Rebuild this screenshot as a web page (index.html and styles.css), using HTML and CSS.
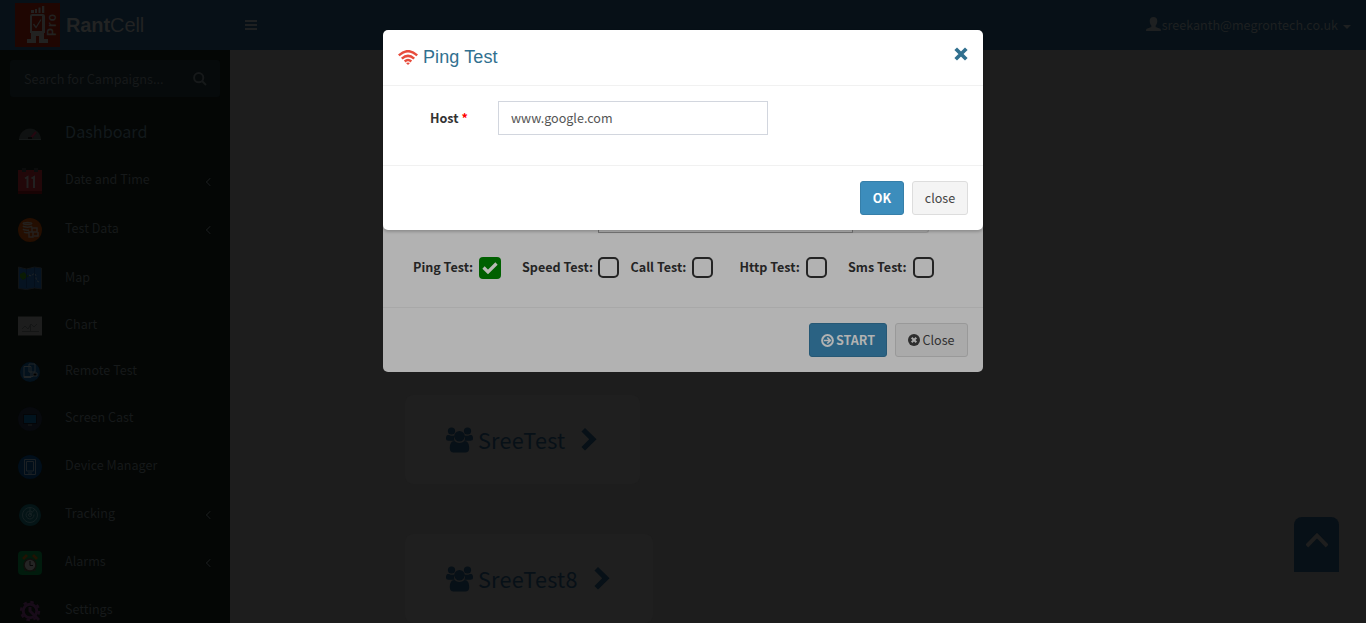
FILE: index.html
```html
<!DOCTYPE html>
<html lang="en">
<head>
<meta charset="utf-8">
<title>RantCell</title>
<link rel="stylesheet" href="styles.css">
</head>
<body>
<svg class="defs" width="0" height="0">
  <symbol id="users" viewBox="0 0 27 26">
    <circle cx="5.5" cy="4" r="3.6"/><circle cx="21.5" cy="4" r="3.6"/>
    <path d="M2 8h1c2 1 4 1 5.500 .6C7.500 11 8 12.500 8.800 13.700H2.600C1 13.700 0 13 0 11.500 0 10 .4 8 2 8zM25 8h-1c-2 1-4 1-5.500.6 1 2.400.5 3.900-.3 5.100h6.200c1.600 0 2.600-.7 2.600-2.200 0-1.500-.4-3.500-2-3.500z"/>
    <circle cx="13.500" cy="9.300" r="5.300"/>
    <path d="M8.500 14c3 2.600 7 2.600 10 0 3.500 0 4.700 3.500 4.700 7.500 0 2.800-1.600 4-3.700 4h-12c-2.100 0-3.700-1.200-3.700-4 0-4 1.200-7.500 4.700-7.500z"/>
  </symbol>
  <symbol id="go" viewBox="0 0 16 23"><path d="M4 0l11.500 11.300L4 22.500.5 19l7.700-7.700L.5 3.500z"/></symbol>
</svg>
<header class="topbar">
  <div class="brand">
    <svg class="logo" viewBox="0 0 45 44">
      <rect width="45" height="44" fill="#1f0602"/>
      <g fill="#222221"><path d="M16 7h3v3h-3zM20 6h2v4h-2zM23.500 4.500h2V10h-2zM27 3h2.300v7H27z"/><path fill-rule="evenodd" d="M17 11h11q2 0 2 2v17h-1v6h4v4h-9v-7h-3v7h-9v-4h4v-6h-1V13q0-2 2-2zm0 2v15h10V13z"/></g>
      <path d="M18.500 21l2.500 3.500 5-8" fill="none" stroke="#222221" stroke-width="1.300"/>
      <text class="pro" transform="translate(41 33) rotate(-90)" textLength="22">Pro</text>
    </svg>
    <span class="name"><b>Rant</b>Cell</span>
  </div>
  <div class="burger"><i></i><i></i><i></i></div>
  <div class="account">
    <svg width="15" height="15" viewBox="0 0 15 15"><path d="M7.500 0c2.500 0 3.800 1.500 3.800 4 0 2-.8 3.600-1.600 4.500v1.400l4 1.700c1 .4 1.300 1 1.300 2.400H0c0-1.400.3-2 1.300-2.400l4-1.700V8.500C4.500 7.600 3.700 6 3.700 4c0-2.500 1.300-4 3.800-4z" fill="#1e2021"/></svg>
    <span>sreekanth@megrontech.co.uk</span><i class="caret"></i>
  </div>
</header>
<div class="page">
  <aside class="sidebar">
    <div class="search"><span>Search for Campaigns...</span>
      <svg width="14" height="14" viewBox="0 0 14 14" fill="none" stroke="#16191a" stroke-width="2"><circle cx="5.700" cy="5.700" r="4.600"/><path d="M9 9l4 4"/></svg>
    </div>
    <nav>
      <a class="row dash"><svg viewBox="0 0 24 24"><path d="M1 18a11 11.500 0 0 1 22 0z" fill="#0f1111"/><path d="M12 17l6-7" stroke="#250710" stroke-width="2"/><path d="M10 18v-3h4v3z" fill="#050505"/><path d="M1 17.500h22" stroke="#161919"/></svg><span>Dashboard</span></a>
      <a class="row date"><svg class="tall" viewBox="0 0 24 26"><path d="M0 2h24v24H0z" fill="#220709"/><path d="M0 23h24v3H0z" fill="#180304"/><path d="M4 0h4v4H4zM16 0h4v4h-4z" fill="#0b0c0c"/><path d="M7 10.500l2.500-1.500v11M13.500 10.500L16 9v11" fill="none" stroke="#222121" stroke-width="2"/></svg><span>Date and Time</span><i class="arrow"></i></a>
      <a class="row"><svg viewBox="0 0 24 24"><circle cx="12" cy="12" r="12" fill="#240e01"/><g fill="none" stroke="#24211e" stroke-width="1.500"><ellipse cx="9.500" cy="5.500" rx="4.300" ry="1"/><path d="M5 8c1 1.500 8 1.500 9 0M5 11c1 1.300 5 1.300 6 1M6 14c1 1 4 1 5 .5M14 10h5v4h-5zM11 14h4v5h-4zM16 18h4v-4"/></g></svg><span>Test Data</span><i class="arrow"></i></a>
      <a class="row"><svg viewBox="0 0 24 24"><path d="M.5 1l8 2 8-2 7 1v21l-7-1-8 1.500-8-1z" fill="#061321" stroke="#101315"/><path d="M2 8l4-2 3 3 2 1-3 2-3 2-3-3z" fill="#0a1b03"/><path d="M8.500 3v19M16.500 1v20" stroke="#040e1a"/><path d="M11 9q3 2 4-1 3-1 3 3 0 4 3 5" stroke="#222526" fill="none" stroke-dasharray="2 1.500"/></svg><span class="low">Map</span></a>
      <a class="row"><svg viewBox="0 0 24 24"><path d="M0 2.500h24v19H0z" fill="#1d1d1d"/><path d="M4 15l3-3 3 3 3-5 3 3 3-3M4 17.500h17M12.500 10v8" stroke="#141515" fill="none"/></svg><span class="low">Chart</span></a>
      <a class="row"><svg viewBox="0 0 24 24"><circle cx="12" cy="12" r="10" fill="#03111c"/><path d="M6 6.500h7v11H6zM11 4h6v8h-6z" fill="#03111c" stroke="#202426"/><path d="M6 16.500h9M15 13h4v3h-4z" stroke="#202426"/></svg><span class="low">Remote Test</span></a>
      <a class="row"><svg viewBox="0 0 24 24"><circle cx="12" cy="12" r="12" fill="#07090d"/><path d="M5.500 7.500h13v9h-13z" fill="#01131e" stroke="#040507"/><path d="M10 18h4" stroke="#181a1b"/></svg><span class="low">Screen Cast</span></a>
      <a class="row"><svg viewBox="0 0 24 24"><circle cx="12" cy="12" r="12" fill="#010e1a"/><path d="M6.500 4.500h11v15h-11zM8.500 6.500h7v9.500h-7zM10 18h4" stroke="#1b2024" fill="none"/></svg><span>Device Manager</span></a>
      <a class="row"><svg viewBox="0 0 24 24"><circle cx="12" cy="12" r="11" fill="#041416"/><g fill="none" stroke="#152022"><circle cx="12" cy="12" r="7.500"/><path d="M14 8.500a4 4 0 1 0 2 3M12 12l5-6M12 4v8"/><circle cx="12" cy="12" r="1.500"/></g></svg><span>Tracking</span><i class="arrow"></i></a>
      <a class="row"><svg viewBox="0 0 24 24"><rect width="24" height="24" rx="4" fill="#011b0d"/><path d="M5 8l4-4M19 8l-4-4" stroke="#211303" stroke-width="3"/><path d="M7 20l2-3M17 20l-2-3" stroke="#111" stroke-width="2"/><circle cx="12" cy="14" r="6" fill="#242424" stroke="#100f0c" stroke-width="1.500"/><path d="M12 10v4.500h3" stroke="#070707" fill="none"/></svg><span>Alarms</span><i class="arrow"></i></a>
      <a class="row"><svg viewBox="0 0 24 24" fill="none" stroke="#180b19"><circle cx="12" cy="12" r="6.800" stroke-width="3"/><circle cx="12" cy="12" r="9" stroke-width="2.500" stroke-dasharray="3.500 3.570"/><path d="M12 8v4l9 9" stroke-width="3"/></svg><span>Settings</span></a>
    </nav>
  </aside>
  <main class="content">
    <div class="card"><svg class="people"><use href="#users"/></svg><span>SreeTest</span><svg class="next"><use href="#go"/></svg></div>
    <div class="card second"><svg class="people"><use href="#users"/></svg><span>SreeTest8</span><svg class="next"><use href="#go"/></svg></div>
    <div class="to-top"><svg width="22" height="16" viewBox="0 0 22 16" fill="none" stroke="#1e1e1e" stroke-width="4"><path d="M.8 14L11 3.500 21.200 14"/></svg></div>
  </main>
</div>

<section class="dialog start-dialog">
  <div class="picker"><div class="field"></div><div class="addon"></div></div>
  <div class="checks">
    <label class="c1">Ping Test:<i class="box on"><svg width="16" height="12" viewBox="0 0 16 12"><path d="M1.500 5.500l4.500 4.500 8.500-8.500" fill="none" stroke="#b9bab5" stroke-width="3.200"/></svg></i></label>
    <label class="c2">Speed Test:<i class="box"></i></label>
    <label class="c3">Call Test:<i class="box"></i></label>
    <label class="c4">Http Test:<i class="box"></i></label>
    <label>Sms Test:<i class="box"></i></label>
  </div>
  <div class="foot">
    <button class="btn start"><svg width="13" height="13" viewBox="0 0 13 13" fill="none" stroke="#b2b2b2" stroke-width="2"><circle cx="6.500" cy="6.500" r="5.400"/><path d="M2.800 6.500h6M6.300 3.500l3 3-3 3" stroke-width="1.700"/></svg>START</button>
    <button class="btn shut"><svg width="12" height="12" viewBox="0 0 12 12"><circle cx="6" cy="6" r="6" fill="#2e2e2e"/><path d="M3.700 3.700l4.600 4.600M8.300 3.700L3.700 8.300" stroke="#aaa" stroke-width="2"/></svg>Close</button>
  </div>
</section>

<section class="dialog ping-dialog">
  <div class="head">
    <svg class="wifi" width="20" height="15" viewBox="0 0 20 15" fill="none" stroke="#e74c3c" stroke-width="2.500"><path d="M.8 5.400Q10-3 19.200 5.400M3.800 8.600Q10 3.100 16.200 8.600M6.700 11.500Q10 8.600 13.300 11.500"/><path d="M8 13q2-1.200 4 0L10 15z" fill="#e74c3c" stroke="none"/></svg>
    <h4>Ping Test</h4>
    <svg class="x" width="14" height="14" viewBox="0 0 14 14"><path d="M3 3l8 8M11 3l-8 8" stroke="#31708f" stroke-width="3.700" stroke-linecap="square"/></svg>
  </div>
  <div class="body"><label>Host <em>*</em></label><input class="host" type="text" value="www.google.com"></div>
  <div class="foot"><button class="btn ok">OK</button><button class="btn plain">close</button></div>
</section>
</body>
</html>
```
FILE: styles.css
```css
* { box-sizing: border-box; }
body { margin: 0; height: 623px; overflow: hidden; position: relative; background: #1d1d1d; font: 12.57px/20px "Noto Sans CJK SC", sans-serif; }
i, em { font-style: normal; }
.defs { position: absolute; }
.topbar { height: 50px; background: #071017; display: flex; align-items: center; color: #1e2021; }
.brand { width: 230px; padding-left: 15px; display: flex; align-items: center; gap: 6px; }
.logo { width: 45px; height: 44px; }
.pro { font: bold 12px "Liberation Sans", sans-serif; fill: #222221; }
.name { font: 20px/30px "Liberation Sans", sans-serif; letter-spacing: -0.1px; color: #222323; }
.burger { padding-left: 15px; display: flex; flex-direction: column; gap: 2px; }
.burger i { width: 12px; height: 2px; background: #1e2021; }
.account { margin-left: auto; padding-right: 15px; display: flex; align-items: center; gap: 1px; }
.account svg { margin-top: -2px; }
.caret { margin-left: 4px; margin-top: 3px; border: 4px solid transparent; border-top-color: #1e2021; border-bottom: 0; }
.page { display: flex; height: 573px; }
.sidebar { width: 230px; background: #040605; color: #16191a; }
.search { margin: 10px 10px 13px; height: 37px; border-radius: 3px; background: #060a0b; padding: 0 13px 0 14px; display: flex; align-items: center; justify-content: space-between; font-size: 12.7px; }
.row { height: 48px; padding: 0 17px 0 18px; display: flex; align-items: center; }
.row svg { width: 24px; height: 24px; margin-right: 23px; }
.row svg.tall { height: 26px; margin-top: -2px; }
.row span { margin-top: -5px; }
.row span.low { margin-top: -3px; }
.row.dash span, .row.date span { margin-top: -7px; }
.row:nth-child(5) { height: 47px; }
.row:nth-child(6) { height: 45px; }
.row:nth-child(7) { height: 49px; }
.dash { font-size: 16.2px; color: #12191c; }
.arrow { margin-left: auto; width: 6px; height: 6px; border: solid #16191a; border-width: 0 0 1.5px 1.5px; transform: rotate(45deg); }
.content { flex: 1; padding: 345px 27px 0 175px; position: relative; display: flex; flex-direction: column; align-items: flex-start; }
.card { height: 89px; flex: none; border-radius: 8px; background: #1f1f1f; color: #071017; font-size: 21.6px; line-height: 30px; display: flex; align-items: center; padding: 0 43px 0 41px; }
.card + .card { margin-top: 50px; }
.card svg { fill: #071017; }
.people { width: 27px; height: 26px; margin-right: 5px; }
.card span { letter-spacing: 0.25px; }
.next { width: 16px; height: 23px; margin-left: 16px; margin-top: 0; }
.to-top { position: absolute; right: 27px; top: 467px; width: 45px; height: 55px; border-radius: 8px 8px 0 0; background: #071017; padding: 15px 0 0 12px; }
.dialog { position: absolute; left: 383px; width: 600px; border-radius: 5px; overflow: hidden; }
.start-dialog { top: 222px; height: 150px; background: #b2b2b2; color: #242424; }
.picker { height: 11px; display: flex; padding-left: 215px; }
.field { width: 255px; border: 1px solid #777; border-top: 0; }
.addon { width: 76px; border: 1px solid #999; border-width: 0 1px 1px 0; border-radius: 0 0 3px 0; background: #aaa; }
.checks { height: 75px; padding-left: 30px; display: flex; align-items: center; border-bottom: 1px solid #a8a8a8; padding-bottom: 6px; }
.checks label { height: 22px; display: flex; align-items: center; gap: 6px; font-weight: 700; line-height: 18px; }
.box { width: 21px; height: 21px; border: 2px solid #242424; border-radius: 5px; }
.box.on { width: 22px; height: 22px; background: #006000; border: 0; border-radius: 4px; display: flex; align-items: center; justify-content: center; margin-top: 2px; }
.checks .c1 { width: 109px; }
.checks .c2 { width: 108.5px; gap: 5px; }
.checks .c3 { width: 109px; }
.checks .c4 { width: 108.5px; }
.foot { display: flex; justify-content: flex-end; gap: 8px; padding: 15px 15px 0; }
.btn { height: 34px; border: 1px solid; border-radius: 3px; padding: 0; font: inherit; display: flex; align-items: center; justify-content: center; gap: 2px; }
.start { width: 78px; background: #2a6283; border-color: #265875; color: #b2b2b2; font-weight: 700; }
.shut { width: 73px; background: #aaa; border-color: #999; color: #303030; }
.ping-dialog { top: 30px; height: 200px; background: #fff; overflow: visible; box-shadow: 0 2px 3px rgba(0,0,0,.2); color: #333; }
.head { height: 56px; border-bottom: 1px solid #f1f1f1; padding: 0 15px; display: flex; align-items: center; }
.wifi { margin-top: -1px; }
.head h4 { margin: -2px 0 0 5px; font: 18px/20px "Liberation Sans", sans-serif; letter-spacing: 0.1px; color: #31708f; }
.x { margin-left: auto; margin-top: -7px; }
.body { height: 80px; padding: 15px 0 0 47px; border-bottom: 1px solid #f1f1f1; display: flex; }
.body label { width: 68px; line-height: 34px; font-weight: 700; }
.body em { color: red; }
.host { width: 270px; height: 34px; border: 1px solid #d2d6de; padding: 0 12px 2px; font: inherit; color: #555; }
.ok { width: 44px; background: #3c8dbc; border-color: #367fa9; color: #fff; font-weight: 700; }
.plain { width: 56px; background: #f4f4f4; border-color: #ddd; color: #444; }
```
